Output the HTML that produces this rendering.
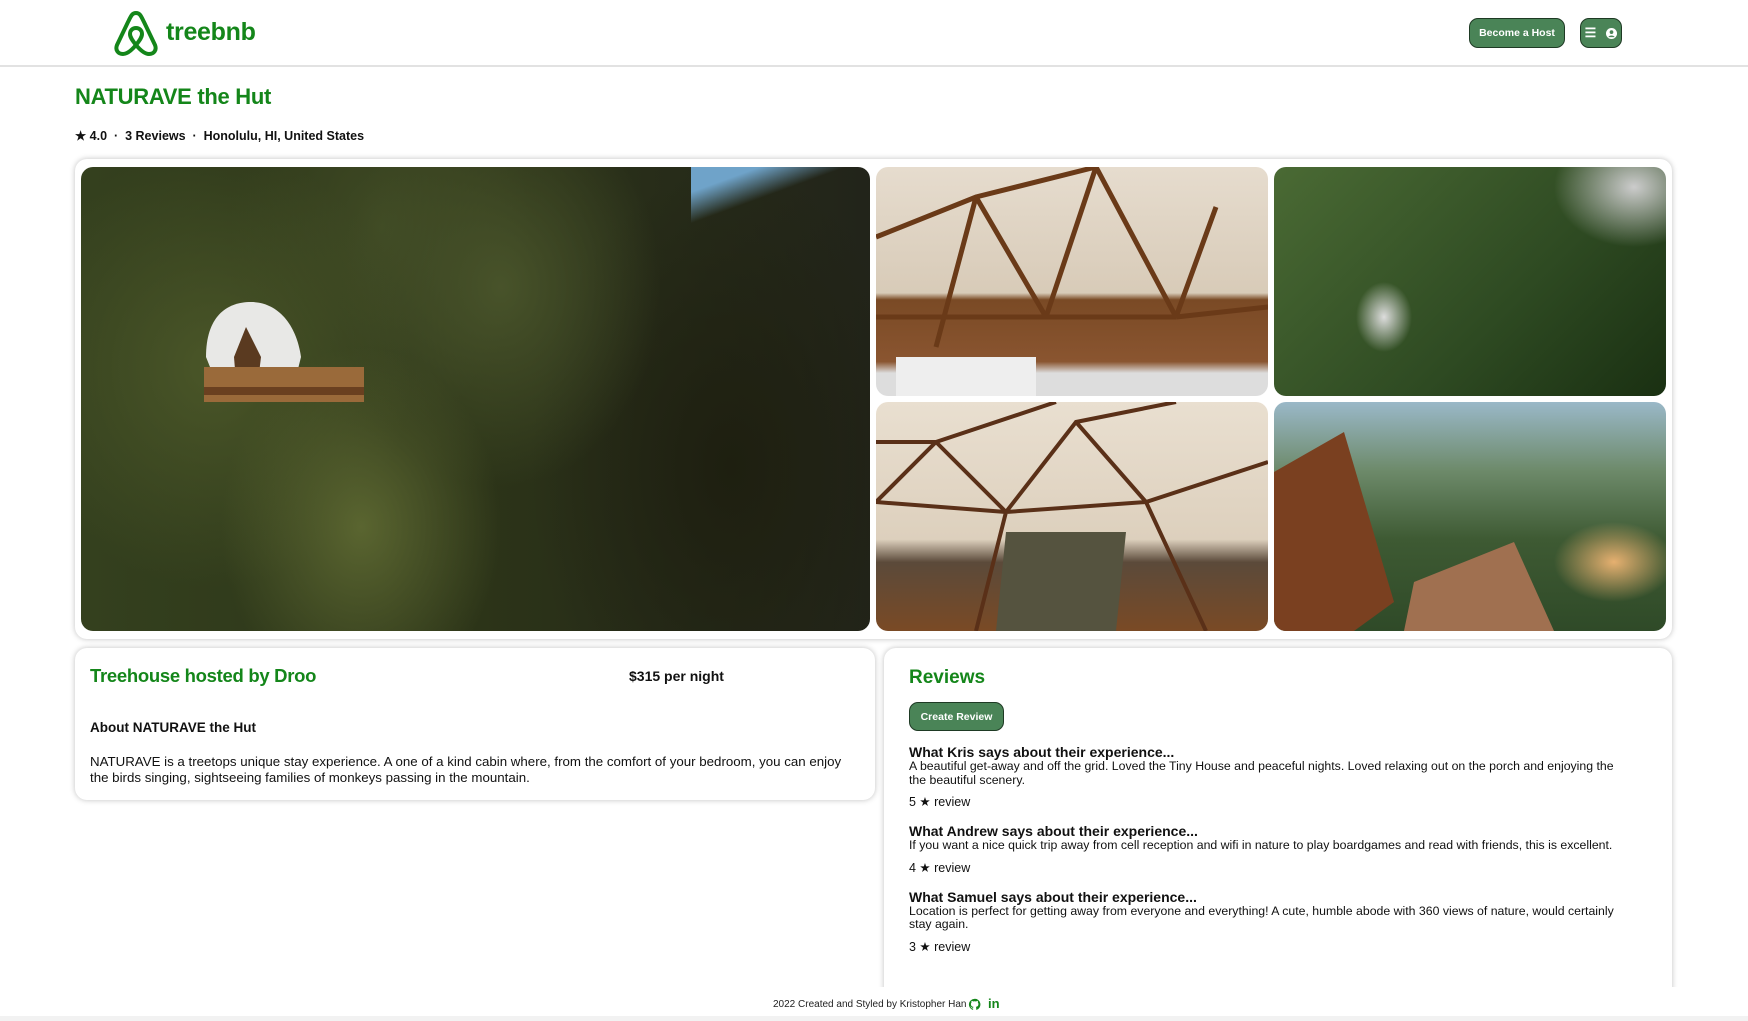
<!DOCTYPE html>
<html><head><meta charset="utf-8"><style>
*{margin:0;padding:0;box-sizing:border-box}
body{width:1748px;height:1021px;overflow:hidden;background:#fff;font-family:"Liberation Sans",Arial,sans-serif;color:#111;position:relative}
.a{position:absolute}
.g{color:#14861a}
.btn{position:absolute;background:#4a8457;border:1.5px solid #1e3a24;border-radius:9px;color:#fff;font-weight:bold;font-size:10.5px;display:flex;align-items:center;justify-content:center}
.card{position:absolute;background:#fff;border-radius:12px;box-shadow:0 0 6px rgba(0,0,0,.25)}
.img{position:absolute;border-radius:12px;overflow:hidden}
.rt{font-weight:bold;font-size:14px}
.rx{font-size:12.3px;line-height:13.5px}
.rr{font-size:12.5px}
</style></head><body>
<div class="a" style="left:0;top:65px;width:1748px;height:2px;background:#e2e2e2"></div>
<svg class="a" style="left:112px;top:9px" width="48" height="48" viewBox="0 0 48 48"><path d="M24 4 C20 4 19 7 16 13 L5 36 C3 41 6 45 11 45 C15 45 19 42 24 36 C29 42 33 45 37 45 C42 45 45 41 43 36 L32 13 C29 7 28 4 24 4 Z M24 36 C20 31 18 28 18 25 C18 21 21 19 24 19 C27 19 30 21 30 25 C30 28 28 31 24 36 Z" fill="none" stroke="#14861a" stroke-width="4" stroke-linejoin="round"/></svg>
<div class="a g" style="left:166px;top:18px;font-size:25px;font-weight:bold;letter-spacing:-0.3px">treebnb</div>
<div class="btn" style="left:1469px;top:18px;width:96px;height:30px">Become a Host</div>
<div class="btn" style="left:1580px;top:18px;width:42px;height:30px;gap:10px"><span style="font-size:13px">☰</span><svg width="11" height="11" viewBox="0 0 12 12"><circle cx="6" cy="6" r="6" fill="#fff"/><circle cx="6" cy="4.5" r="2" fill="#4a8457"/><path d="M2.5 10 C3.5 7.5 8.5 7.5 9.5 10" fill="#4a8457"/></svg></div>
<div class="a g" style="left:75px;top:84px;font-size:22px;font-weight:bold;letter-spacing:-0.3px">NATURAVE the Hut</div>
<div class="a" style="left:75px;top:128px;font-size:12.5px;font-weight:bold">★ 4.0 &nbsp;·&nbsp; 3 Reviews &nbsp;·&nbsp; Honolulu, HI, United States</div>

<div class="card" style="left:75px;top:159px;width:1597px;height:480px"></div>
<div class="img" style="left:81px;top:167px;width:789px;height:464px;background:radial-gradient(ellipse 140px 180px at 280px 360px,#5a6530,transparent),radial-gradient(ellipse 200px 220px at 130px 200px,#4a5628,transparent),radial-gradient(ellipse 160px 200px at 420px 120px,#48532a,transparent),radial-gradient(ellipse 150px 200px at 300px 60px,#3f4a24,transparent),radial-gradient(ellipse 200px 300px at 650px 300px,#1e1f10,transparent),linear-gradient(90deg,#34401e,#2c3418 50%,#22241a)">
<div class="a" style="left:610px;top:0;width:180px;height:60px;background:linear-gradient(160deg,#6fa3c9 20%,transparent 45%)"></div>
<svg class="a" style="left:105px;top:130px" width="180" height="130"><path d="M20 60 C20 20 40 5 65 5 C90 5 110 25 115 60 L110 80 L30 85 Z" fill="#e8e8e6"/><path d="M60 30 L75 60 L72 85 L50 85 L48 60 Z" fill="#5a3a20"/><rect x="18" y="70" width="160" height="35" fill="#9a6a3a"/><rect x="18" y="90" width="160" height="8" fill="#6a4020"/></svg>
</div>
<div class="img" style="left:876px;top:167px;width:392px;height:229px;background:linear-gradient(#e6dcce,#d8cbb8 55%,#7a4a25 58%,#8a5530 85%,#ddd 90%)">
<svg class="a" width="392" height="229"><g stroke="#6a3a18" stroke-width="5" fill="none"><path d="M0 70 L100 30 L220 0 M100 30 L60 180 M100 30 L170 150 M220 0 L170 150 M220 0 L300 150 M300 150 L392 140 M170 150 L300 150 M0 150 L170 150 M300 150 L340 40"/></g><rect x="20" y="190" width="140" height="39" fill="#eee"/></svg></div>
<div class="img" style="left:1274px;top:167px;width:392px;height:229px;background:radial-gradient(ellipse 40px 50px at 110px 150px,#ddd,transparent 70%),radial-gradient(ellipse 80px 60px at 360px 20px,#ccc,transparent),linear-gradient(135deg,#4a6a34,#2e4a22 60%,#1a3012)"></div>
<div class="img" style="left:876px;top:402px;width:392px;height:229px;background:linear-gradient(#e9dfd0,#ddd0bd 60%,#5b4a3a 70%,#7a4a25)">
<svg class="a" width="392" height="229"><g stroke="#5a3018" stroke-width="4" fill="none"><path d="M0 100 L60 40 L180 0 M60 40 L130 110 L200 20 L300 0 M200 20 L270 100 L392 60 M130 110 L270 100 M0 100 L130 110 M130 110 L100 229 M270 100 L330 229 M0 40 L60 40"/></g><path d="M130 130 L250 130 L240 229 L120 229 Z" fill="#55533f"/></svg></div>
<div class="img" style="left:1274px;top:402px;width:392px;height:229px;background:radial-gradient(ellipse 60px 40px at 340px 160px,#e6b070,transparent),linear-gradient(#9ab8c8,#6d8a6a 30%,#3e5a33 60%,#2f4a28)">
<svg class="a" width="392" height="229"><path d="M0 70 L70 30 L120 200 L80 229 L0 229 Z" fill="#7a4020"/><path d="M140 180 L240 140 L280 229 L130 229 Z" fill="#a07050"/></svg></div>

<div class="card" style="left:75px;top:648px;width:800px;height:152px"></div>
<div class="a g" style="left:90px;top:665px;font-size:18.5px;font-weight:bold;letter-spacing:-0.3px">Treehouse hosted by Droo</div>
<div class="a" style="left:629px;top:668px;font-size:14px;font-weight:bold">$315 per night</div>
<div class="a" style="left:90px;top:720px;font-size:13.5px;font-weight:bold">About NATURAVE the Hut</div>
<div class="a" style="left:90px;top:754px;width:760px;font-size:13.3px;line-height:16px">NATURAVE is a treetops unique stay experience. A one of a kind cabin where, from the comfort of your bedroom, you can enjoy the birds singing, sightseeing families of monkeys passing in the mountain.</div>

<div class="card" style="left:884px;top:648px;width:788px;height:360px"></div>
<div class="a" style="left:870px;top:987px;width:820px;height:34px;background:#fff"></div>
<div class="a g" style="left:909px;top:667px;font-size:19px;font-weight:bold">Reviews</div>
<div class="btn" style="left:909px;top:702px;width:95px;height:29px">Create Review</div>
<div class="a" style="left:909px;top:744px;width:725px">
<div class="rt">What Kris says about their experience...</div>
<div class="rx">A beautiful get-away and off the grid. Loved the Tiny House and peaceful nights. Loved relaxing out on the porch and enjoying the the beautiful scenery.</div>
<div class="rr" style="margin-top:7px">5 ★ review</div>
<div class="rt" style="margin-top:14px">What Andrew says about their experience...</div>
<div class="rx">If you want a nice quick trip away from cell reception and wifi in nature to play boardgames and read with friends, this is excellent.</div>
<div class="rr" style="margin-top:7px">4 ★ review</div>
<div class="rt" style="margin-top:14px">What Samuel says about their experience...</div>
<div class="rx">Location is perfect for getting away from everyone and everything! A cute, humble abode with 360 views of nature, would certainly stay again.</div>
<div class="rr" style="margin-top:7px">3 ★ review</div>
</div>
<div class="a" style="left:773px;top:999px;font-size:10px;color:#222">2022 Created and Styled by Kristopher Han</div>
<svg class="a" style="left:968px;top:998px" width="13" height="13" viewBox="0 0 16 16"><path d="M8 1a7 7 0 0 0-2.2 13.6c.4 0 .5-.2.5-.4v-1.3c-2 .4-2.4-.9-2.4-.9-.3-.8-.8-1-.8-1-.6-.4.1-.4.1-.4.7 0 1.1.7 1.1.7.6 1.1 1.7.8 2.1.6 0-.5.2-.8.4-1-1.6-.2-3.2-.8-3.2-3.5 0-.8.3-1.4.7-1.9 0-.2-.3-.9.1-1.9 0 0 .6-.2 2 .7a6.6 6.6 0 0 1 3.6 0c1.4-.9 2-.7 2-.7.4 1 .1 1.7.1 1.9.5.5.7 1.1.7 1.9 0 2.7-1.6 3.3-3.2 3.5.3.2.5.7.5 1.3v2c0 .2.1.4.5.4A7 7 0 0 0 8 1z" fill="#14861a"/></svg>
<div class="a g" style="left:988px;top:996px;font-size:13px;font-weight:bold">in</div>
<div class="a" style="left:0;top:1016px;width:1748px;height:5px;background:#f2f2f2"></div>
</body></html>
